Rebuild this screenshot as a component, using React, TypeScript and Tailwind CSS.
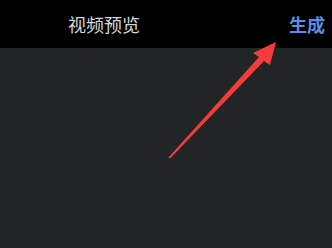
export default function App() {
  return (
    <div className="relative w-[332px] h-[248px] overflow-hidden bg-[#222526] font-['Noto_Sans_CJK_SC',sans-serif]">
      {/* Top bar */}
      <div className="flex items-center justify-between h-[48px] bg-black pl-[68px] pr-[7px]">
        <span className="text-[18px] leading-none text-[#d6d6d6]">视频预览</span>
        <span className="text-[18px] leading-none font-bold text-[#5a8ee0]">生成</span>
      </div>

      {/* Red annotation arrow */}
      <svg className="absolute left-0 top-0 pointer-events-none" width="332" height="248" viewBox="0 0 332 248">
        <polygon
          points="168.5,157.5 259,57 253,53 276,42 270,65 264,61 170,158.5"
          fill="#f53b3b"
        />
      </svg>
    </div>
  );
}
